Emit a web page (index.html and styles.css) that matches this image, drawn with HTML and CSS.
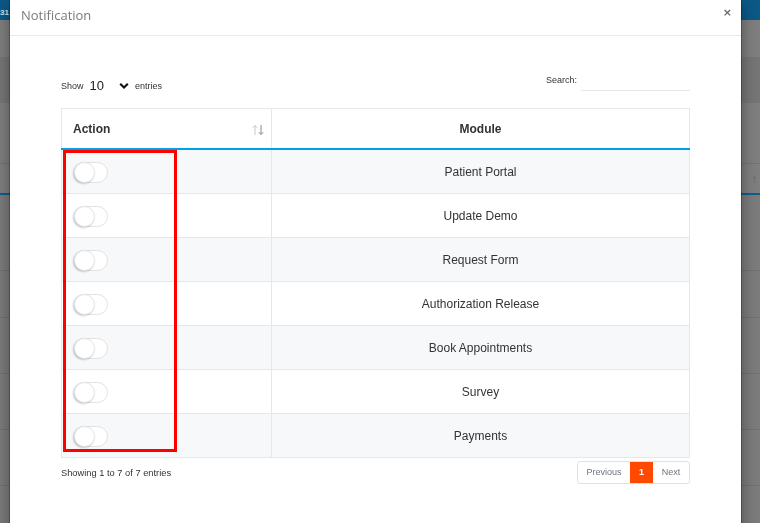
FILE: index.html
```html
<!DOCTYPE html>
<html lang="en">
<head>
    <meta charset="UTF-8">
    <meta name="viewport" content="width=device-width, initial-scale=1.0">
    <title>Notification</title>
    <link rel="stylesheet" href="styles.css">
</head>
<body>
    <div class="page">
        <div class="topbar"><span class="topbar-date">31</span></div>
        <div class="band"></div>
        <div class="band band-dark"></div>
        <div class="band band-tall"></div>
        <div class="band band-head"><span class="ghost-sort">↑</span></div>
        <div class="bg-row bg-row-first"></div>
        <div class="bg-row"></div>
        <div class="bg-row bg-row-tall"></div>
        <div class="bg-row bg-row-tall"></div>
        <div class="bg-row bg-row-tall"></div>
        <div class="bg-row bg-row-tall"></div>
    </div>

    <div class="modal">
        <div class="modal-header">
            <h4 class="modal-title">Notification</h4>
            <button class="close">&times;</button>
        </div>

        <div class="modal-body">
            <div class="dt-controls">
                <div class="dt-length">
                    Show
                    <span class="dt-select">
                        10
                        <svg width="10" height="8" viewBox="0 0 10 8"><path d="M1.2 1.8 L5 5.6 L8.8 1.8" fill="none" stroke="#111" stroke-width="2.1"/></svg>
                    </span>
                    entries
                </div>
                <div class="dt-search">
                    <label>Search:</label>
                    <input type="text">
                </div>
            </div>

            <div class="dt-wrap">
                <table class="dt">
                    <thead>
                        <tr>
                            <th class="col-action">
                                Action
                                <svg class="sort-icon" width="12" height="12" viewBox="0 0 12 12">
                                    <path d="M3 11 V1.5 M0.8 3.8 L3 1.5 L5.2 3.8" fill="none" stroke="#c8c8c8" stroke-width="1"/>
                                    <path d="M9 1 V10.5 M6.8 8.2 L9 10.5 L11.2 8.2" fill="none" stroke="#8a8a8a" stroke-width="1"/>
                                </svg>
                            </th>
                            <th class="col-module">Module</th>
                        </tr>
                    </thead>
                    <tbody>
                        <tr><td><span class="toggle"></span></td><td>Patient Portal</td></tr>
                        <tr><td><span class="toggle"></span></td><td>Update Demo</td></tr>
                        <tr><td><span class="toggle"></span></td><td>Request Form</td></tr>
                        <tr><td><span class="toggle"></span></td><td>Authorization Release</td></tr>
                        <tr><td><span class="toggle"></span></td><td>Book Appointments</td></tr>
                        <tr><td><span class="toggle"></span></td><td>Survey</td></tr>
                        <tr><td><span class="toggle"></span></td><td>Payments</td></tr>
                    </tbody>
                </table>
                <div class="highlight"></div>
            </div>

            <div class="dt-footer">
                <div class="dt-info">Showing 1 to 7 of 7 entries</div>
                <div class="pagination">
                    <span class="page-link page-prev">Previous</span>
                    <span class="page-link page-active">1</span>
                    <span class="page-link page-next">Next</span>
                </div>
            </div>
        </div>
    </div>
</body>
</html>
```

FILE: styles.css
```css
body {
    margin: 0;
    padding: 0;
    height: 523px;
    overflow: hidden;
    font-family: "Liberation Sans", Arial, sans-serif;
    background-color: #7d7d7d;
}

/* darkened page behind the modal */
.page {
    display: flex;
    flex-direction: column;
}

.topbar {
    height: 20px;
    background-color: #0b5987;
    color: #d8e4ec;
    font-size: 8px;
    font-weight: bold;
    line-height: 26px;
    overflow: hidden;
}

.topbar-date {
    margin-left: 0;
}

.band {
    height: 37px;
    background-color: #7f7f7f;
}

.band-dark {
    height: 46px;
    background-color: #767676;
}

.band-tall {
    height: 60px;
    border-bottom: 1px solid #727272;
}

.band-head {
    height: 29px;
    border-bottom: 2px solid #0d5f8f;
    display: flex;
    justify-content: flex-end;
    align-items: center;
    padding-right: 2px;
}

.ghost-sort {
    color: #6a6a6a;
    font-size: 14px;
}

.bg-row {
    height: 46px;
    border-bottom: 1px solid #717171;
    background-color: #7c7c7c;
}

.bg-row-first {
    height: 75px;
}

.bg-row-tall {
    height: 55px;
}

/* modal */
.modal {
    position: fixed;
    top: 0;
    left: 10px;
    width: 731px;
    height: 560px;
    background-color: #fff;
    box-shadow: 0 0 0 1px rgba(0, 0, 0, 0.25), 0 5px 15px rgba(0, 0, 0, 0.4);
}

.modal-header {
    display: flex;
    justify-content: space-between;
    align-items: center;
    padding: 7px 11px 12px 11px;
    border-bottom: 1px solid #e9e9e9;
}

.modal-title {
    margin: 0;
    font-family: "Open Sans", sans-serif;
    font-weight: 400;
    font-size: 13px;
    line-height: 16px;
    color: #7a7a7a;
}

.close {
    border: none;
    background: none;
    padding: 0;
    margin-top: -5px;
    margin-right: -2px;
    font-family: "DejaVu Sans", sans-serif;
    font-size: 11px;
    font-weight: bold;
    color: #666;
    line-height: 1;
}

.modal-body {
    padding: 36px 51px 0 51px;
}

.dt-controls {
    display: flex;
    justify-content: space-between;
    align-items: center;
    height: 26px;
    margin-bottom: 10px;
}

.dt-length {
    display: flex;
    align-items: center;
    font-size: 9px;
    color: #333;
    padding-top: 1px;
}

.dt-select {
    display: flex;
    align-items: center;
    gap: 15px;
    margin: 0 6px 0 6px;
    font-size: 13px;
    color: #222;
}

.dt-search {
    align-self: flex-start;
    display: flex;
    align-items: flex-start;
    font-size: 9px;
    color: #333;
}

.dt-search label {
    line-height: 18px;
    margin-top: -1px;
}

.dt-search input {
    width: 109px;
    height: 18px;
    margin-left: 4px;
    padding: 0;
    border: none;
    border-bottom: 1px solid #e5e7ea;
    outline: none;
}

.dt-wrap {
    position: relative;
}

.dt {
    width: 100%;
    border-collapse: collapse;
    border: 1px solid #e4e7eb;
    font-size: 12px;
    color: #333;
}

.dt th {
    height: 39px;
    padding: 0 11px;
    font-weight: bold;
    border-bottom: 2px solid #00a2e6;
    border-right: 1px solid #e4e7eb;
}

.col-action {
    width: 187px;
    text-align: left;
    position: relative;
}

.col-module {
    text-align: center;
}

.sort-icon {
    position: absolute;
    right: 7px;
    top: 15px;
}

.dt td {
    height: 43px;
    padding: 0 11px;
    border-top: 1px solid #e4e7eb;
    border-right: 1px solid #e4e7eb;
    text-align: center;
    vertical-align: middle;
}

.dt td:first-child {
    text-align: left;
}

.dt tbody tr:nth-child(odd) {
    background-color: #f7f8fa;
}

.toggle {
    display: block;
    position: relative;
    width: 34px;
    height: 21px;
    box-sizing: border-box;
    border: 1px solid #e2e2e2;
    border-radius: 11px;
    background-color: #fff;
    margin-top: 1px;
    margin-left: 1px;
}

.toggle::before {
    content: '';
    position: absolute;
    left: -1px;
    top: -1px;
    width: 21px;
    height: 21px;
    box-sizing: border-box;
    border-radius: 50%;
    background-color: #fff;
    border: 1px solid #e4e4e4;
    box-shadow: -1px 1px 2px rgba(0, 0, 0, 0.22);
}

.highlight {
    position: absolute;
    left: 2px;
    top: 42px;
    width: 114px;
    height: 302px;
    box-sizing: border-box;
    border: 3px solid #ff0000;
    pointer-events: none;
}

.dt-footer {
    display: flex;
    justify-content: space-between;
    align-items: center;
    margin-top: 3px;
}

.dt-info {
    font-size: 9.3px;
    color: #333;
}

.pagination {
    display: flex;
    border: 1px solid #dee2e6;
    border-radius: 3px;
    overflow: hidden;
    font-size: 9px;
    color: #6c757d;
}

.page-link {
    height: 21px;
    line-height: 21px;
    text-align: center;
}

.page-prev {
    width: 52px;
}

.page-active {
    width: 23px;
    background-color: #ff4800;
    color: #fff;
    font-weight: bold;
}

.page-next {
    width: 36px;
}
```
